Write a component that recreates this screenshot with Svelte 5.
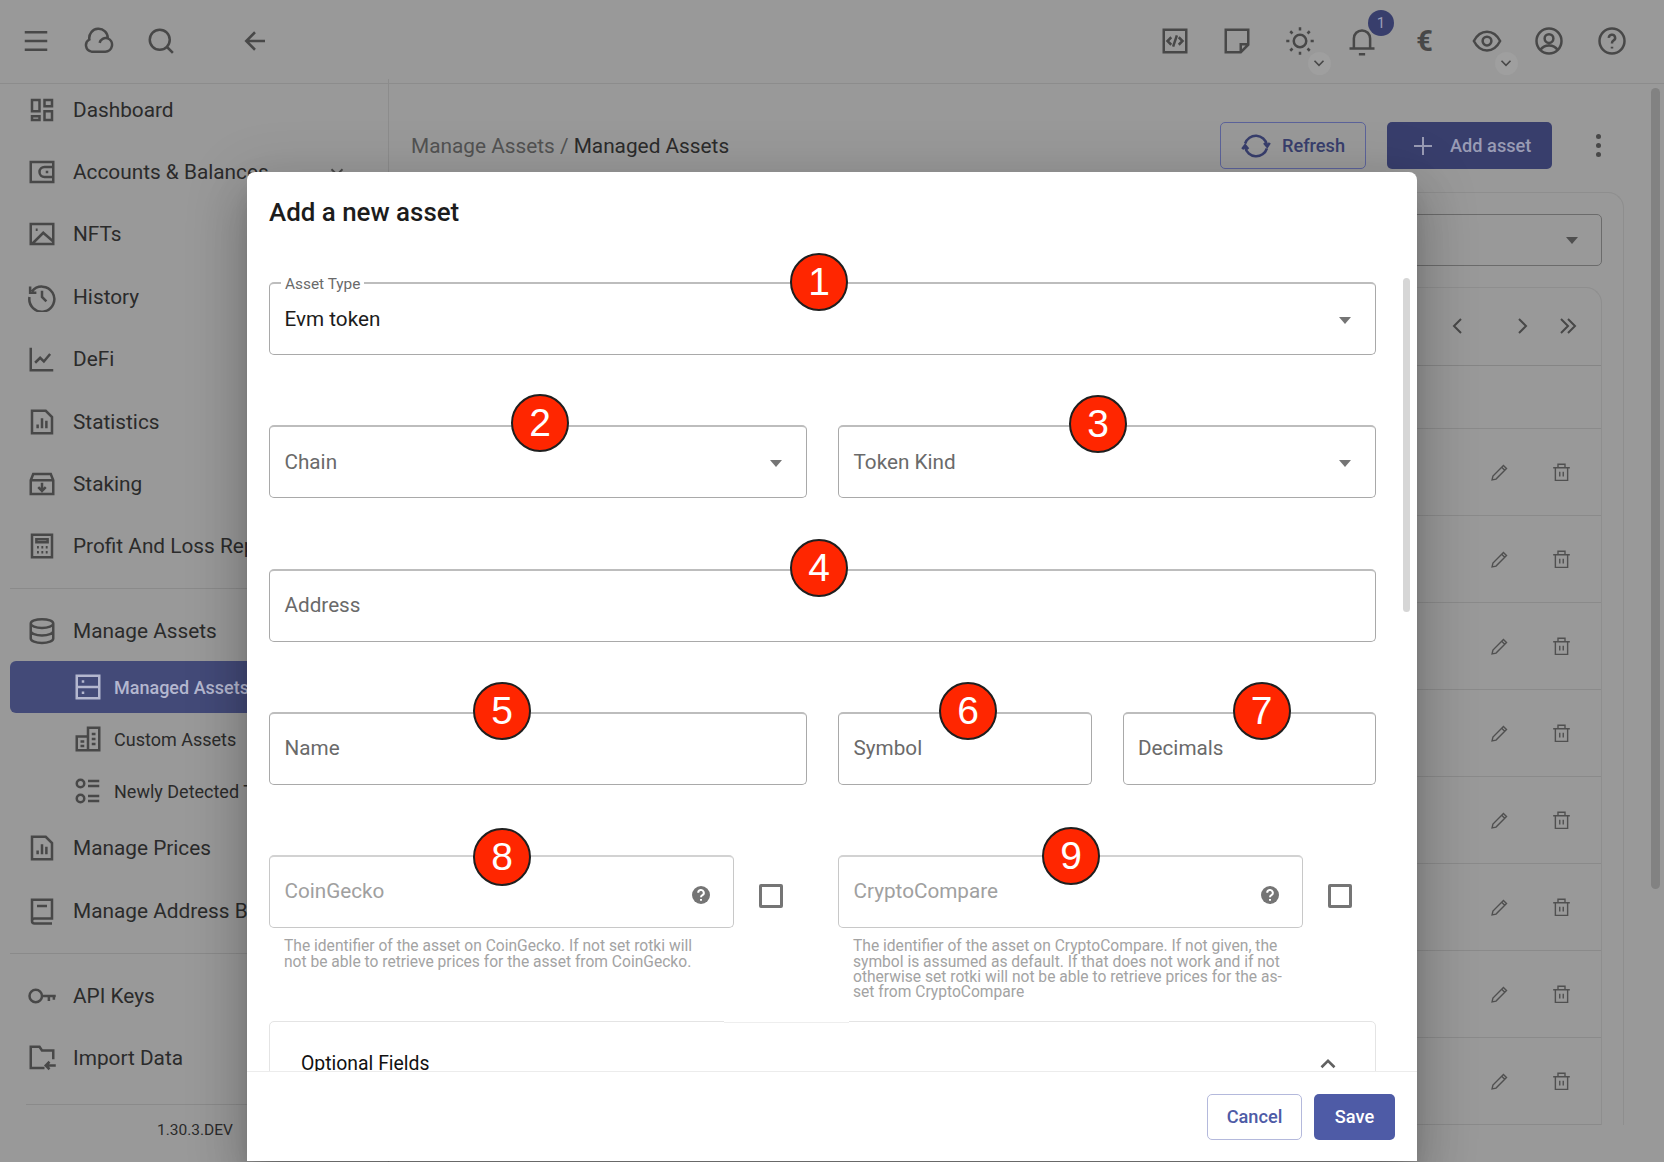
<script>
  const icons = {
    menu: 'M3 5h18M3 12h18M3 19h18',
    cloud: 'M6 20.500H17a5.500 5.500 0 0 0 2-10.600A7.400 7.400 0 1 0 4.300 10.800 5.200 5.200 0 0 0 6 20.500zM12.500 13.500a5 5 0 0 1 6.500-3.600',
    search: 'M11 3a8 8 0 1 0 0 16 8 8 0 0 0 0-16zM16.800 16.800l4.700 4.700',
    back: 'M20 12H5M12 5l-7 7 7 7',
    code: 'M3 3h18v18H3zM9 9l-3 3 3 3M15 9l3 3-3 3M13.500 7.500l-3 9',
    note: 'M3 3h18v12l-6 6H3zM21 14.500h-6V21',
    sun: 'M12 7a5 5 0 1 0 0 10 5 5 0 0 0 0-10zM12 1v2.500M12 20.500V23M1 12h2.500M20.500 12H23M4.200 4.200L6 6M18 18l1.800 1.800M4.200 19.800L6 18M18 6l1.800-1.800',
    bell: 'M5.500 18v-8a6.500 6.500 0 0 1 13 0v8M2 18h20M9.500 22.500h5',
    eye: 'M1.500 12C4 7 8 4.500 12 4.500S20 7 22.500 12C20 17 16 19.500 12 19.500S4 17 1.500 12zM12 8.500a3.500 3.500 0 1 0 0 7 3.500 3.500 0 0 0 0-7z',
    user: 'M12 2a10 10 0 1 0 0 20 10 10 0 0 0 0-20zM12 6.500a3.500 3.500 0 1 0 0 7 3.500 3.500 0 0 0 0-7zM5.200 19c1.500-2.400 4-3.500 6.800-3.500s5.300 1.100 6.800 3.500',
    help: 'M12 2a10 10 0 1 0 0 20 10 10 0 0 0 0-20zM9.500 9.500a2.500 2.500 0 1 1 3.600 2.200c-.7.400-1.100.900-1.100 1.800v.5M12 16.500v1.500',
    dashboard: 'M4 4h6v9H4zM14 4h6v5h-6zM4 17h6v3H4zM14 13h6v7h-6z',
    wallet: 'M3 4h18v16H3zM21 8h-7a4 4 0 0 0 0 8h7M15 12h2',
    image: 'M3 4h18v16H3zM4 20l9-9 8 7M7 8.500h1.500',
    history: 'M4 7.500A10 10 0 1 1 2 12M2.500 3.500V8.500H7.500M12 7v5l3.500 3.500',
    chart: 'M3 3v18h18M6.500 15l4-4 3 3 5-6',
    stats: 'M4 3h11l5 5v13H4zM8.500 17v-3M12 17V9M15.500 17v-6',
    staking: 'M3 9l2-5h14l2 5v11H3zM3 9h18M12 11v6M9 14.500l3 3 3-3',
    calc: 'M4 3h16v18H4zM7.500 6.500h9v2.500h-9zM8 13h1.500M11.500 13H13M15 13h1.500M8 17h1.500M11.500 17H13M15 17h1.500',
    db: 'M12 2.500c5 0 9 1.600 9 3.500s-4 3.500-9 3.500S3 7.900 3 6s4-3.500 9-3.500zM3 6v12c0 2 4 3.500 9 3.500s9-1.500 9-3.500V6M3 12c0 2 4 3.500 9 3.500s9-1.500 9-3.500',
    managed: 'M3 3h18v18H3zM3 12h18M7 7.500h2M7 16.500h2',
    custom: 'M3 21V10h9v11zM12 21V3h9v18zM6 14h3M6 17.500h3M15 8h3M15 12h3M15 16h3',
    list: 'M6 3a3 3 0 1 0 0 6 3 3 0 0 0 0-6zM6 15a3 3 0 1 0 0 6 3 3 0 0 0 0-6zM12 4h9M12 8h9M12 16h9M12 20h9',
    book: 'M4 20V3h16v15H6a2 2 0 0 0 0 4h14M8 8h8',
    key: 'M7 7a5 5 0 1 0 0 10 5 5 0 0 0 0-10zM12 12h11M17.500 12v4M21.500 12v3',
    folder: 'M21 13V6h-9l-2-3H3v17h11M23 18h-8M18 15l-3 3 3 3',
    down: 'M6 9l6 6 6-6',
    up: 'M6 15l6-6 6 6',
    left: 'M15 5l-7 7 7 7',
    right: 'M9 5l7 7-7 7',
    double: 'M5 5l7 7-7 7M12 5l7 7-7 7',
    refresh: 'M3.300 10A9 9 0 0 1 20.700 11M20.700 14A9 9 0 0 1 3.300 13M18.500 9.500l2.500 3 2-3M1 14.500l2.300-3 2.500 3',
    plus: 'M12 3v18M3 12h18',
    edit: 'M3.500 20.500l1-4.500L16.500 4l3.500 3.500-12 12zM14.500 6l3.500 3.500',
    trash: 'M2.500 6.500h19M8 6.500V2.500h8v4M5 6.500V21h14V6.500M10 11v5.500M14 11v5.500'
  };

  const mainNav = [
    { label: 'Dashboard', icon: 'dashboard' },
    { label: 'Accounts & Balances', icon: 'wallet', more: true },
    { label: 'NFTs', icon: 'image' },
    { label: 'History', icon: 'history' },
    { label: 'DeFi', icon: 'chart' },
    { label: 'Statistics', icon: 'stats' },
    { label: 'Staking', icon: 'staking' },
    { label: 'Profit And Loss Report', icon: 'calc' }
  ];
  const subNav = [
    { label: 'Managed Assets', icon: 'managed', active: true },
    { label: 'Custom Assets', icon: 'custom' },
    { label: 'Newly Detected Tokens', icon: 'list' }
  ];
  const rows = [1, 2, 3, 4, 5, 6, 7, 8];
</script>

{#snippet icon(name, cls = '')}
  <svg class={'ic ' + cls} viewBox="0 0 24 24"><path d={icons[name]} /></svg>
{/snippet}

{#snippet navItem(item)}
  <div class="nav-item">
    {@render icon(item.icon)}
    <span>{item.label}</span>
    {#if item.more}{@render icon('down', 'more')}{/if}
  </div>
{/snippet}

{#snippet pin(n, x, y = 0)}
  <div class="pin" style={`left:${x - 30}px;top:${y - 28}px`}>{n}</div>
{/snippet}

{#snippet field(label, n, x, y, isSelect = false)}
  <div class="field">
    <span class="placeholder">{label}</span>
    {#if isSelect}<i class="caret"></i>{/if}
    {@render pin(n, x, y)}
  </div>
{/snippet}

{#snippet idField(label, n, x, y, text)}
  <div class="id-col">
    <div class="id-row">
      <div class="field faint">
        <span class="placeholder">{label}</span>
        <svg class="hint" viewBox="0 0 20 20">
          <circle cx="10" cy="10" r="9" />
          <path d="M7.200 7.800a2.800 2.800 0 1 1 4.200 2.400c-.9.500-1.400 1-1.400 2M10 14v1.800" />
        </svg>
        {@render pin(n, x, y)}
      </div>
      <div class="check"></div>
    </div>
    <p class="help">{text}</p>
  </div>
{/snippet}

<div class="page">
  <header class="topbar">
    <button class="tb">{@render icon('menu')}</button>
    <button class="tb">{@render icon('cloud')}</button>
    <button class="tb">{@render icon('search')}</button>
    <button class="tb back">{@render icon('back')}</button>
    <div class="spacer"></div>
    <button class="tb">{@render icon('code')}</button>
    <button class="tb">{@render icon('note')}</button>
    <button class="tb">{@render icon('sun')}<span class="drop">{@render icon('down')}</span></button>
    <button class="tb">{@render icon('bell')}<span class="count">1</span></button>
    <button class="tb euro">€</button>
    <button class="tb">{@render icon('eye')}<span class="drop">{@render icon('down')}</span></button>
    <button class="tb">{@render icon('user')}</button>
    <button class="tb">{@render icon('help')}</button>
  </header>

  <div class="content">
    <aside class="sidebar">
      {#each mainNav as item}
        {@render navItem(item)}
      {/each}
      <hr class="rule first" />
      {@render navItem({ label: 'Manage Assets', icon: 'db' })}
      <div class="sub-nav">
        {#each subNav as item}
          <div class={'sub-item ' + (item.active ? 'active' : '')}>
            {@render icon(item.icon)}
            <span>{item.label}</span>
          </div>
        {/each}
      </div>
      {@render navItem({ label: 'Manage Prices', icon: 'stats' })}
      {@render navItem({ label: 'Manage Address Book', icon: 'book' })}
      <hr class="rule" />
      {@render navItem({ label: 'API Keys', icon: 'key' })}
      {@render navItem({ label: 'Import Data', icon: 'folder' })}
      <hr class="rule last" />
      <div class="version">1.30.3.DEV</div>
    </aside>

    <main class="main">
      <div class="title-row">
        <div class="crumbs"><span>Manage Assets /</span> <b>Managed Assets</b></div>
        <button class="btn outline">{@render icon('refresh')}Refresh</button>
        <button class="btn solid">{@render icon('plus')}Add asset</button>
        <div class="kebab"><i></i><i></i><i></i></div>
      </div>
      <section class="card">
        <div class="filter"><i class="caret"></i></div>
        <div class="table">
          <div class="pager">
            {@render icon('left')}
            {@render icon('right')}
            {@render icon('double')}
          </div>
          <div class="thead"></div>
          {#each rows as row (row)}
            <div class="row">
              {@render icon('edit')}
              {@render icon('trash')}
            </div>
          {/each}
        </div>
      </section>
    </main>
  </div>

  <div class="page-scroll"></div>

  <div class="dialog">
    <h2>Add a new asset</h2>
    <div class="dialog-body">
      <div class="field filled">
        <span class="legend">Asset Type</span>
        <span class="value">Evm token</span>
        <i class="caret"></i>
        {@render pin(1, 550, -3)}
      </div>
      <div class="cols">
        {@render field('Chain', 2, 271, -5, true)}
        {@render field('Token Kind', 3, 260, -4, true)}
      </div>
      {@render field('Address', 4, 550, -4)}
      <div class="cols">
        {@render field('Name', 5, 233, -4)}
        <div class="cols">
          {@render field('Symbol', 6, 130, -4)}
          {@render field('Decimals', 7, 139, -4)}
        </div>
      </div>
      <div class="cols top">
        {@render idField('CoinGecko', 8, 233, -1, 'The identifier of the asset on CoinGecko. If not set rotki will not be able to retrieve prices for the asset from CoinGecko.')}
        {@render idField('CryptoCompare', 9, 233, -2, 'The identifier of the asset on CryptoCompare. If not given, the symbol is assumed as default. If that does not work and if not otherwise set rotki will not be able to retrieve prices for the as\u00adset from CryptoCompare')}
      </div>
      <div class="optional">
        <span>Optional Fields</span>
        {@render icon('up')}
      </div>
    </div>
    <div class="dialog-scroll"></div>
    <footer>
      <button class="action cancel">Cancel</button>
      <button class="action save">Save</button>
    </footer>
  </div>
</div>

<style>
  :global(body) {
    background: #999;
    overflow: hidden;
  }

  .page {
    position: relative;
    height: 1162px;
    overflow: hidden;
    font-family: Roboto, "Liberation Sans", sans-serif;
    color: #2b2b2b;
  }

  .ic {
    width: 30px;
    height: 30px;
    flex: none;
    fill: none;
    stroke: #484848;
    stroke-width: 2;
  }

  button {
    font-family: inherit;
    background: none;
    border: none;
    padding: 0;
  }

  .topbar {
    display: flex;
    align-items: center;
    box-sizing: border-box;
    height: 84px;
    padding: 0 21px 2px 5px;
    border-bottom: 1px solid #8c8c8c;
  }

  .tb {
    position: relative;
    width: 62.4px;
    height: 40px;
    display: flex;
    align-items: center;
    justify-content: center;
  }

  .back {
    margin-left: 32px;
  }

  .spacer {
    flex: 1;
  }

  .euro {
    font-size: 29px;
    font-weight: 700;
    color: #484848;
  }

  .drop {
    position: absolute;
    left: 39px;
    top: 31px;
    width: 23px;
    height: 23px;
    border-radius: 50%;
    background: #9f9f9f;
    display: flex;
    align-items: center;
    justify-content: center;
  }

  .drop .ic {
    width: 18px;
    height: 18px;
    stroke-width: 2.2;
  }

  .count {
    position: absolute;
    left: 37px;
    top: -11px;
    width: 26px;
    height: 26px;
    border-radius: 50%;
    background: #383e6c;
    color: #9a9db8;
    font-size: 15px;
    line-height: 26px;
  }

  .content {
    display: flex;
    height: 1078px;
  }

  .sidebar {
    width: 389px;
    flex: none;
    box-sizing: border-box;
    margin-top: -5.5px;
    border-right: 1px solid #8c8c8c;
    font-size: 20.8px;
  }

  .nav-item {
    display: flex;
    align-items: center;
    gap: 16px;
    height: 62.4px;
    padding-left: 27px;
    white-space: nowrap;
  }

  .nav-item .more {
    width: 22px;
    height: 22px;
    margin-left: 41px;
  }

  .rule {
    margin: 11px 0 11px 10px;
    border: none;
    border-top: 1px solid #8a8a8a;
  }

  .rule.first {
    margin: 10px 0 11px 10px;
  }

  .rule.last {
    margin: 14px 0 0 26px;
  }

  .sub-nav {
    margin-top: -1px;
  }

  .sub-item {
    display: flex;
    align-items: center;
    gap: 11px;
    height: 52px;
    margin-left: 10px;
    padding-left: 63px;
    font-size: 18px;
    white-space: nowrap;
    border-radius: 6px 0 0 6px;
  }

  .sub-item.active {
    background: #434a78;
    color: #b4b7cf;
    font-weight: 500;
  }

  .sub-item.active .ic {
    stroke: #b4b7cf;
  }

  .version {
    padding: 16px 0 0 157px;
    font-size: 15.5px;
  }

  .main {
    flex: 1;
    min-width: 0;
    padding: 38px 40px 0 22px;
  }

  .title-row {
    display: flex;
    align-items: center;
    height: 47px;
  }

  .crumbs {
    flex: 1;
    font-size: 20.8px;
    color: #525252;
  }

  .crumbs b {
    font-weight: 400;
    color: #2b2b2b;
  }

  .btn {
    display: flex;
    align-items: center;
    height: 47px;
    border-radius: 5px;
    font-size: 18.2px;
    font-weight: 500;
    box-sizing: border-box;
  }

  .outline {
    width: 146px;
    justify-content: center;
    gap: 11px;
    border: 1px solid #5c639a;
    color: #383e6c;
  }

  .outline .ic {
    stroke: #383e6c;
  }

  .solid {
    width: 165px;
    gap: 15px;
    padding-left: 24px;
    margin-left: 21px;
    background: #383e6c;
    color: #999bb4;
  }

  .solid .ic {
    width: 24px;
    height: 24px;
    stroke: #999bb4;
  }

  .kebab {
    width: 52px;
    margin-left: 20px;
    display: flex;
    flex-direction: column;
    align-items: center;
    gap: 4px;
  }

  .kebab i {
    width: 5px;
    height: 5px;
    border-radius: 50%;
    background: #484848;
  }

  .card {
    margin-top: 23px;
    padding: 21px 21px 0;
    border: 1px solid #8e8e8e;
    border-bottom: none;
    border-radius: 16px 16px 0 0;
  }

  .filter {
    position: relative;
    height: 52px;
    box-sizing: border-box;
    border: 1px solid #6b6b6b;
    border-radius: 5px;
  }

  .filter .caret {
    border-top-color: #4f4f4f;
    right: 23px;
    margin-top: -3px;
  }

  .table {
    margin-top: 21px;
    border: 1px solid #8e8e8e;
    border-bottom: none;
    border-radius: 16px 16px 0 0;
  }

  .pager {
    height: 77px;
    box-sizing: border-box;
    padding: 0 21px 2px 0;
    display: flex;
    align-items: center;
    justify-content: flex-end;
  }

  .pager .ic {
    width: 24px;
    height: 24px;
    margin-left: 22px;
  }

  .pager .ic:nth-child(2) {
    margin-left: 40px;
  }

  .thead {
    height: 62px;
    border-top: 1px solid #858585;
    border-bottom: 1px solid #8a8a8a;
  }

  .row {
    height: 86px;
    border-bottom: 1px solid #8a8a8a;
    display: flex;
    align-items: center;
    justify-content: flex-end;
    gap: 41px;
    padding-right: 29px;
  }

  .row .ic {
    width: 21px;
    height: 21px;
    stroke-width: 1.6;
    stroke: #505050;
  }

  .page-scroll {
    position: absolute;
    left: 1651px;
    top: 88px;
    width: 9px;
    height: 801px;
    border-radius: 5px;
    background: #828282;
  }

  .dialog {
    position: absolute;
    left: 247px;
    top: 172px;
    width: 1170px;
    height: 989px;
    box-sizing: border-box;
    display: flex;
    flex-direction: column;
    background: #fff;
    border-radius: 8px 8px 0 0;
    box-shadow: 0 14px 19px -9px rgba(0, 0, 0, 0.2), 0 30px 48px 4px rgba(0, 0, 0, 0.14), 0 11px 58px 10px rgba(0, 0, 0, 0.12);
    color: #1c1c1c;
  }

  h2 {
    margin: 0;
    padding: 21px 22px 0;
    height: 70px;
    box-sizing: border-box;
    font-size: 25.9px;
    line-height: 38px;
    font-weight: 500;
  }

  .dialog-body {
    flex: 1;
    min-height: 0;
    overflow: hidden;
    padding: 40px 41px 0 22px;
    display: flex;
    flex-direction: column;
    gap: 70.3px;
  }

  .cols {
    display: grid;
    grid-template-columns: 1fr 1fr;
    gap: 31px;
    align-items: center;
  }

  .cols.top {
    align-items: start;
  }

  .field {
    position: relative;
    flex: none;
    height: 73px;
    box-sizing: border-box;
    display: flex;
    align-items: center;
    padding: 0 0 1px 14.5px;
    border: 1px solid #a9a9a9;
    border-top: 2px solid #bdbdbd;
    border-radius: 5px;
    font-size: 20.7px;
  }

  .field.faint {
    flex: 1;
    padding-bottom: 3px;
    border-color: #c8c8c8;
    border-top-color: #d2d2d2;
  }

  .placeholder {
    color: #6a6a6a;
  }

  .faint .placeholder {
    color: #a0a0a0;
  }

  .value {
    color: #1c1c1c;
  }

  .legend {
    position: absolute;
    left: 11px;
    top: -9px;
    padding: 0 4px;
    background: #fff;
    font-size: 15.4px;
    line-height: 18px;
    color: #6a6a6a;
  }

  .caret {
    position: absolute;
    right: 24px;
    top: 50%;
    margin-top: -2px;
    border: 6.5px solid transparent;
    border-top: 7px solid #757575;
    border-bottom: none;
  }

  .pin {
    position: absolute;
    box-sizing: border-box;
    width: 58px;
    height: 58px;
    border: 2px solid #1f1f1f;
    border-radius: 50%;
    background: #ff2600;
    color: #fff;
    font-family: "Liberation Sans", sans-serif;
    font-size: 39px;
    line-height: 54px;
    text-align: center;
  }

  .id-row {
    display: flex;
    align-items: center;
  }

  .hint {
    position: absolute;
    right: 22px;
    top: 28px;
    width: 20px;
    height: 20px;
  }

  .hint circle {
    fill: #757575;
  }

  .hint path {
    fill: none;
    stroke: #fff;
    stroke-width: 2;
  }

  .check {
    flex: none;
    width: 24px;
    height: 24px;
    box-sizing: border-box;
    margin: 8px 24px 0 25px;
    border: 3px solid #757575;
    border-radius: 2px;
  }

  .help {
    margin: 11px 91px 0 15px;
    font-size: 15.6px;
    line-height: 15.4px;
    color: #a3a3a3;
    hyphens: manual;
  }

  .optional {
    position: relative;
    flex: none;
    margin-top: -50px;
    height: 92px;
    box-sizing: border-box;
    padding: 29px 34px 0 31px;
    display: flex;
    justify-content: space-between;
    align-items: flex-start;
    border: 1px solid #e4e4e4;
    border-radius: 5px 5px 0 0;
    font-size: 19.4px;
    line-height: 26px;
    color: #111;
  }

  .optional::before {
    content: "";
    position: absolute;
    left: 454px;
    top: -1px;
    width: 125px;
    height: 1px;
    background: #fff;
    border-bottom: 1px solid #eee;
  }

  .optional .ic {
    width: 26px;
    height: 26px;
    stroke: #616161;
    stroke-width: 2.4;
  }

  .dialog-scroll {
    position: absolute;
    left: 1156px;
    top: 106px;
    width: 7px;
    height: 334px;
    border-radius: 4px;
    background: #d6d6d6;
  }

  footer {
    flex: none;
    height: 90px;
    box-sizing: border-box;
    border-top: 1px solid #ececec;
    display: flex;
    justify-content: flex-end;
    gap: 12px;
    padding: 22px 22px 0 0;
  }

  .action {
    height: 46px;
    border-radius: 5px;
    font-size: 18.2px;
    font-weight: 500;
    padding-bottom: 2px;
  }

  .cancel {
    width: 95px;
    border: 1px solid #b4b9dc;
    color: #4e5ba6;
  }

  .save {
    width: 81px;
    background: #4e5ba6;
    color: #fff;
  }
</style>
